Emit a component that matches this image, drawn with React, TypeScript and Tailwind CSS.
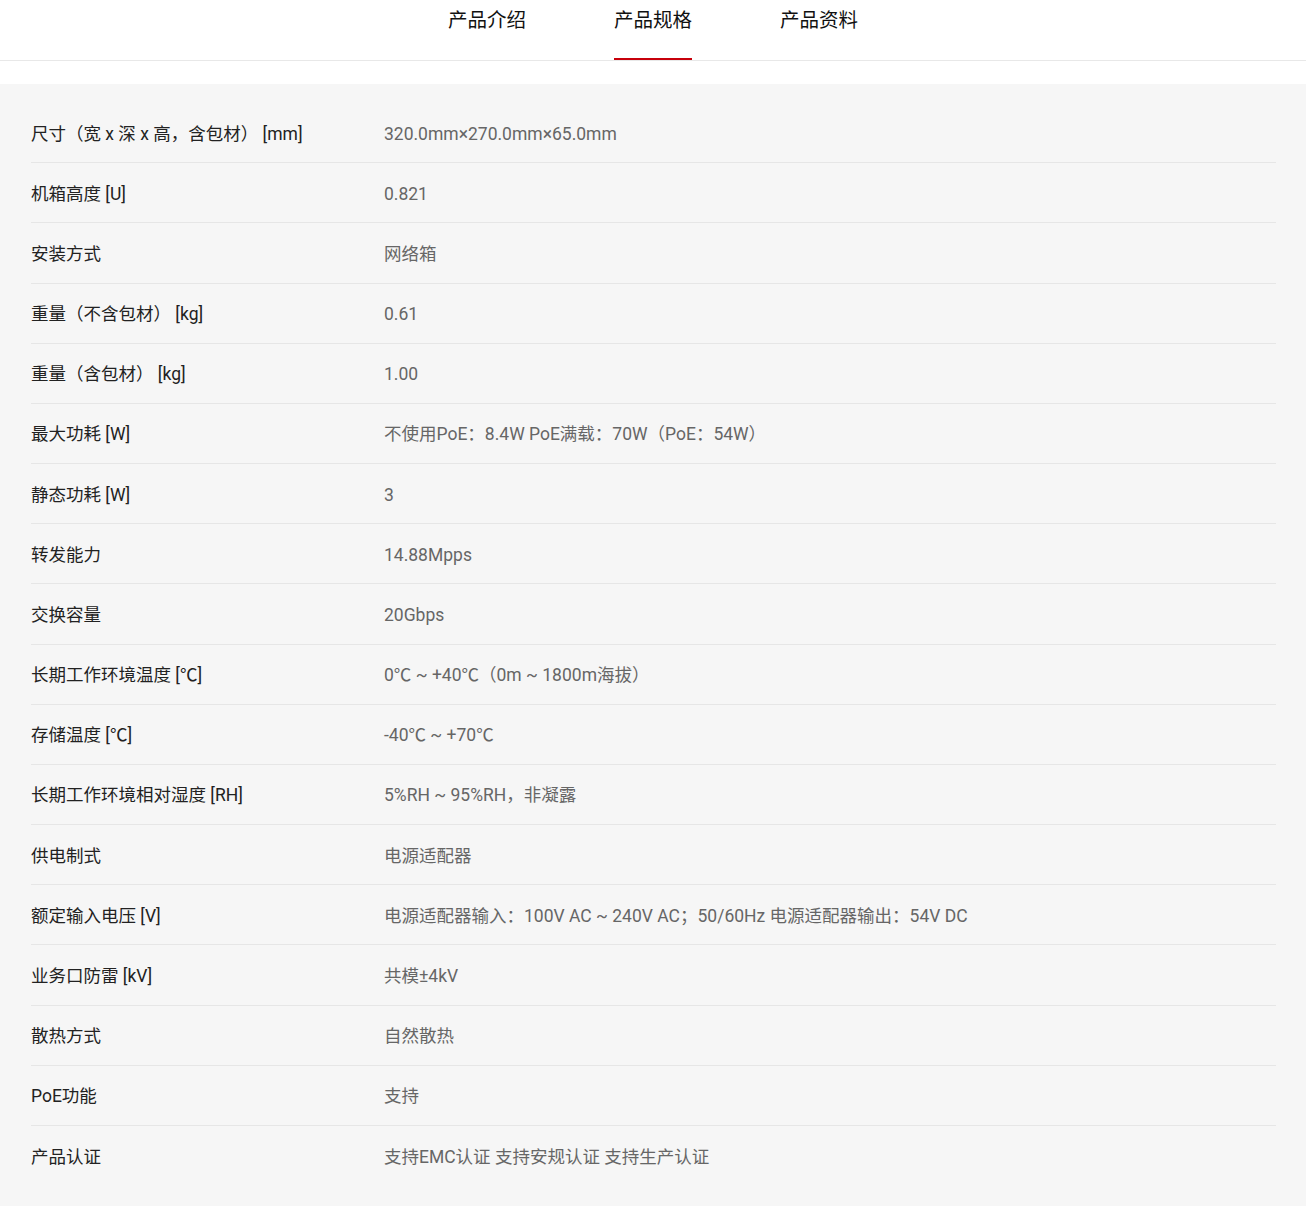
const TABS = ["产品介绍", "产品规格", "产品资料"];

const SPECS: [string, string][] = [
  ["尺寸（宽 x 深 x 高，含包材） [mm]", "320.0mm×270.0mm×65.0mm"],
  ["机箱高度 [U]", "0.821"],
  ["安装方式", "网络箱"],
  ["重量（不含包材） [kg]", "0.61"],
  ["重量（含包材） [kg]", "1.00"],
  ["最大功耗 [W]", "不使用PoE：8.4W PoE满载：70W（PoE：54W）"],
  ["静态功耗 [W]", "3"],
  ["转发能力", "14.88Mpps"],
  ["交换容量", "20Gbps"],
  ["长期工作环境温度 [℃]", "0℃ ~ +40℃（0m ~ 1800m海拔）"],
  ["存储温度 [℃]", "-40℃ ~ +70℃"],
  ["长期工作环境相对湿度 [RH]", "5%RH ~ 95%RH，非凝露"],
  ["供电制式", "电源适配器"],
  ["额定输入电压 [V]", "电源适配器输入：100V AC ~ 240V AC；50/60Hz 电源适配器输出：54V DC"],
  ["业务口防雷 [kV]", "共模±4kV"],
  ["散热方式", "自然散热"],
  ["PoE功能", "支持"],
  ["产品认证", "支持EMC认证 支持安规认证 支持生产认证"],
];

export default function App() {
  const active = 1;
  return (
    <div className="min-h-[1209px] bg-white font-['Roboto','Noto_Sans_CJK_SC',sans-serif]">
      {/* Tabs */}
      <div className="h-[61px] border-b border-[#e8e8e8] flex justify-center gap-[88px]">
        {TABS.map((t, i) => (
          <div key={t} className="relative h-full">
            <div className="pt-[7px] text-[19.5px] leading-[28px] text-[#111]">{t}</div>
            {i === active && (
              <div className="absolute left-0 right-0 bottom-0 h-[2px] bg-[#c7000b]" />
            )}
          </div>
        ))}
      </div>

      {/* Spec table */}
      <div className="mt-[23px] bg-[#f6f6f6] pl-[31px] pr-[30px] pt-[19px] pb-[20px]">
        {SPECS.map(([k, v], i) => (
          <div
            key={k}
            className={`h-[60.18px] flex items-center text-[17.5px] leading-[24px] pt-[2px] ${
              i < SPECS.length - 1 ? "border-b border-[#e6e6e6]" : ""
            }`}
          >
            <div className="w-[353px] shrink-0 text-[#222]">{k}</div>
            <div className="text-[#666]">{v}</div>
          </div>
        ))}
      </div>
    </div>
  );
}
